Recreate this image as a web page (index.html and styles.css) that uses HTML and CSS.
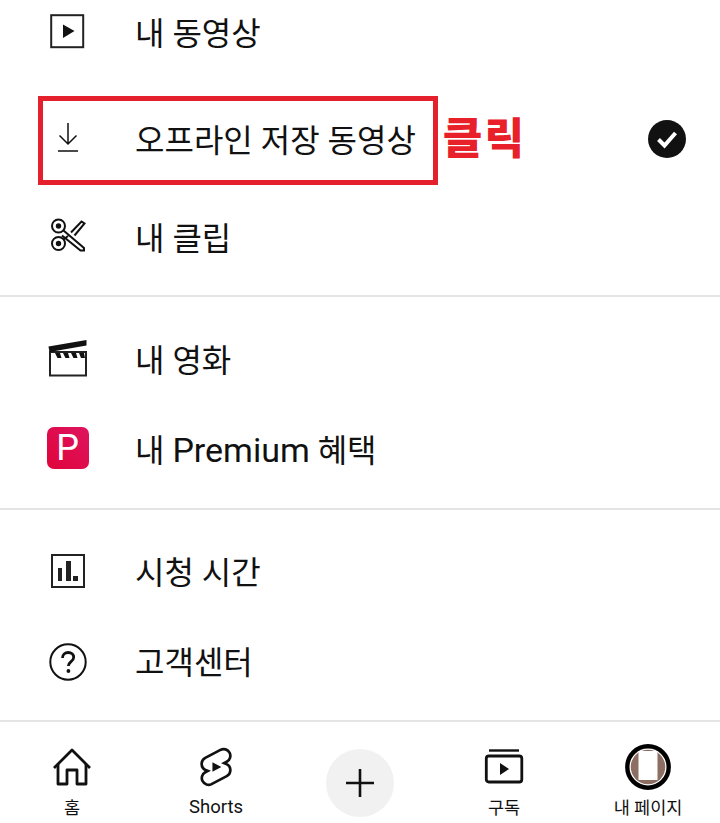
FILE: index.html
```html
<!DOCTYPE html>
<html lang="ko">
<head>
    <meta charset="UTF-8">
    <meta name="viewport" content="width=device-width, initial-scale=1.0">
    <title>내 페이지</title>
    <link rel="stylesheet" href="styles.css">
</head>
<body>

<div class="page">
    <div class="menu">
        <div class="group group-first">
            <div class="row row-short">
                <span class="row-icon">
                    <svg width="36" height="36" viewBox="0 0 36 36"><rect x="1.2" y="1.2" width="32" height="32" fill="none" stroke="#222" stroke-width="2"/><path d="M13 10.5 24.5 17 13 24z" fill="#111"/></svg>
                </span>
                <span class="row-text">내 동영상</span>
            </div>
            <div class="row row-marked">
                <span class="row-icon icon-raised">
                    <svg width="22" height="30" viewBox="0 0 22 30"><path d="M11 1V22M2.500 13.500 11 22l8.500-8.500M1 29H21" fill="none" stroke="#111" stroke-width="1.500"/></svg>
                </span>
                <span class="row-text">오프라인 저장 동영상</span>
                <span class="click-label">클릭</span>
                <span class="check">
                    <svg width="38" height="38" viewBox="0 0 38 38"><circle cx="19" cy="19" r="19" fill="#111"/><path d="M10.500 19.500 16.500 25.500 27.500 13" fill="none" stroke="#fff" stroke-width="4"/></svg>
                </span>
                <div class="mark-box"></div>
            </div>
            <div class="row">
                <span class="row-icon icon-raised">
                    <svg width="36" height="36" viewBox="0 0 36 36" fill="none" stroke="#111" stroke-width="2"><circle cx="8.500" cy="9" r="6.500"/><circle cx="8.500" cy="26.500" r="6.500"/><circle cx="8.500" cy="9" r="1.700" fill="#111"/><circle cx="8.500" cy="26.500" r="1.700" fill="#111"/><path d="M13.500 13.500 34 31V33.500H30.500L12 18.500M21 15.500 31.500 4.500 34.500 6.500 24.500 18.500M13.500 22.500 18 19"/></svg>
                </span>
                <span class="row-text">내 클립</span>
            </div>
        </div>

        <div class="group group-second">
            <div class="row">
                <span class="row-icon icon-raised">
                    <svg width="40" height="38" viewBox="0 0 40 38"><rect x="2" y="13" width="36" height="23.500" fill="none" stroke="#222" stroke-width="2"/><path d="M0.500 7.500 38.500 1V6.500L1.500 13z" fill="#111"/><path d="M7 14h5l1.500 5h-4zM15 14h5l1.500 5h-4zM23 14h5l1.500 5h-4zM31 14h5l1 5h-4z" fill="#111"/></svg>
                </span>
                <span class="row-text">내 영화</span>
            </div>
            <div class="row">
                <span class="row-icon icon-raised">
                    <span class="premium-badge">P</span>
                </span>
                <span class="row-text">내 <span class="row-latin">Premium</span> 혜택</span>
            </div>
        </div>

        <div class="group group-third">
            <div class="row">
                <span class="row-icon">
                    <svg width="36" height="36" viewBox="0 0 36 36"><rect x="2" y="2" width="32" height="32" fill="none" stroke="#222" stroke-width="2"/><path d="M8 15h4v13H8zM16 8h5v20h-5zM23 23h5v5h-5z" fill="#222"/></svg>
                </span>
                <span class="row-text">시청 시간</span>
            </div>
            <div class="row">
                <span class="row-icon icon-lowered">
                    <svg width="38" height="38" viewBox="0 0 38 38"><circle cx="19" cy="19" r="17.700" fill="none" stroke="#111" stroke-width="2"/><path d="M13.500 15c0-3.500 2.500-5.500 5.700-5.500 3.200 0 5.500 2 5.500 4.800 0 4.500-5.300 4.300-5.300 8.700" fill="none" stroke="#111" stroke-width="2.800"/><circle cx="19.400" cy="28" r="1.900" fill="#111"/></svg>
                </span>
                <span class="row-text">고객센터</span>
            </div>
        </div>
    </div>

    <div class="nav">
        <div class="nav-item">
            <svg class="nav-icon" width="40" height="40" viewBox="0 0 40 40" fill="none" stroke="#111" stroke-width="2.800" stroke-linejoin="round"><path d="M2 21 20 3 38 21"/><path d="M6 17V37H15V23H25V37H34V17"/></svg>
            <span class="nav-label">홈</span>
        </div>
        <div class="nav-item">
            <svg class="nav-icon" width="43" height="43" viewBox="0 0 24 24"><path d="M17.770 10.320l-1.200-.5L18 9.060a3.740 3.740 0 0 0-3.500-6.620L6 6.940a3.740 3.740 0 0 0 .23 6.740l1.200.49L6 14.930a3.750 3.750 0 0 0 3.500 6.630l8.500-4.500a3.740 3.740 0 0 0-.23-6.740z" fill="none" stroke="#111" stroke-width="1.500"/><path d="M10 14.650 15 12l-5-2.650z" fill="#111"/></svg>
            <span class="nav-label nav-label-latin">Shorts</span>
        </div>
        <div class="nav-item nav-create">
            <span class="create-button">
                <svg width="32" height="32" viewBox="0 0 32 32"><path d="M16 2V30M2 16H30" stroke="#111" stroke-width="2.600"/></svg>
            </span>
        </div>
        <div class="nav-item">
            <svg class="nav-icon" width="40" height="40" viewBox="0 0 40 40" fill="none" stroke="#111"><path d="M5 3.500H35" stroke-width="2.400"/><rect x="2.300" y="9" width="35.500" height="26" rx="2.500" stroke-width="2.800"/><path d="M16 16 25 22 16 28z" fill="#111" stroke="none"/></svg>
            <span class="nav-label">구독</span>
        </div>
        <div class="nav-item">
            <svg class="nav-icon" width="46" height="46" viewBox="0 0 46 46"><circle cx="23" cy="23" r="20.700" fill="#fff" stroke="#000" stroke-width="4.400"/><circle cx="23" cy="23" r="17.300" fill="#8d6e63"/><path d="M13.500 7H32.500V36H13.500z" fill="#fff"/></svg>
            <span class="nav-label">내 페이지</span>
        </div>
    </div>
</div>

</body>
</html>
```

FILE: styles.css
```css
* {
    box-sizing: border-box;
}
html, body {
    margin: 0;
    height: 100%;
}
body {
    font-family: Roboto, "Noto Sans CJK KR", sans-serif;
    background-color: #fff;
    color: #111;
}
.page {
    height: 823px;
    display: flex;
    flex-direction: column;
    overflow: hidden;
}
.menu {
    flex: 1;
}
.group {
    border-bottom: 2px solid #e4e4e4;
}
.group-first {
    height: 297px;
}
.group-second {
    height: 213px;
    padding-top: 17px;
}
.group-second .icon-raised {
    margin-bottom: 3px;
}
.group-third {
    height: 212px;
    padding-top: 16px;
}
.row {
    height: 90px;
    display: flex;
    align-items: center;
    position: relative;
}
.row-short {
    height: 64px;
    margin-bottom: 30px;
}
.row-marked {
    margin-bottom: 8px;
}
.row-icon {
    width: 135px;
    display: flex;
    justify-content: center;
    align-items: center;
    flex-shrink: 0;
}
.icon-raised {
    margin-bottom: 5px;
}
.icon-lowered {
    margin-top: 2px;
}
.row-text {
    margin-top: 4px;
    font-size: 32px;
    line-height: 40px;
    white-space: nowrap;
}
.row-latin {
    font-size: 34px;
    line-height: 1;
}
.click-label {
    margin-left: 27px;
    font-size: 43px;
    font-weight: 900;
    line-height: 48px;
    letter-spacing: 2px;
    color: #e8202a;
    white-space: nowrap;
}
.check {
    margin-left: auto;
    margin-right: 34px;
    display: flex;
}
.mark-box {
    position: absolute;
    left: 38px;
    top: 2px;
    width: 400px;
    height: 89px;
    border: 5px solid #e3202c;
}
.premium-badge {
    width: 42px;
    height: 42px;
    border-radius: 7px;
    background: linear-gradient(45deg, #e0043a, #de1460);
    color: #fff;
    font-size: 36px;
    font-weight: 400;
    line-height: 42px;
    text-align: center;
}
.nav {
    height: 101px;
    display: grid;
    grid-template-columns: repeat(5, 144px);
}
.nav-item {
    display: flex;
    flex-direction: column;
    align-items: center;
    position: relative;
    padding-top: 24px;
}
.nav-icon {
    position: absolute;
    left: 50%;
    top: 45px;
    transform: translate(-50%, -50%);
}
.nav-label {
    position: absolute;
    top: 75px;
    font-size: 17.500px;
    line-height: 22px;
    white-space: nowrap;
}
.nav-label-latin {
    font-size: 18.500px;
    top: 74px;
}
.nav-create {
    padding-top: 27px;
}
.create-button {
    width: 68px;
    height: 68px;
    border-radius: 50%;
    background-color: #f1f1f1;
    display: flex;
    justify-content: center;
    align-items: center;
}
```
